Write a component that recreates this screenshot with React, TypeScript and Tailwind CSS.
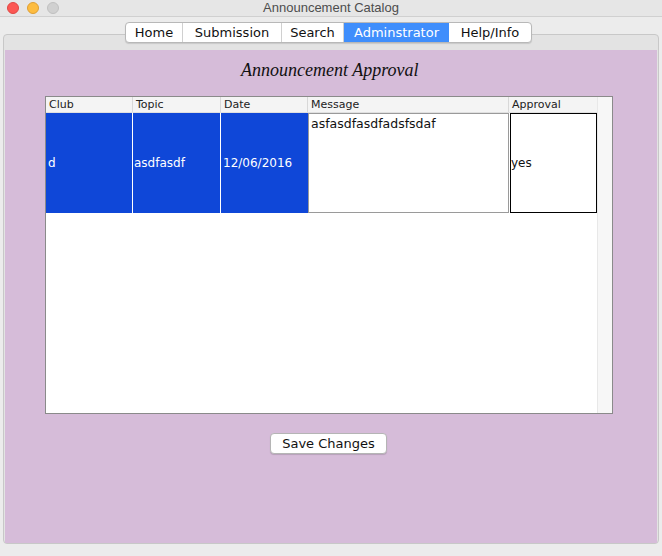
import React from "react";

export default function App() {
  const tabs = ["Home", "Submission", "Search", "Adminstrator", "Help/Info"];
  const widths = [57, 99, 62, 105, 82];
  return (
    <div className="w-[662px] h-[556px] bg-[#ececec] overflow-hidden relative" style={{ fontFamily: '"DejaVu Sans", "Noto Sans", sans-serif' }}>
      {/* Title bar */}
      <div className="h-[17px] bg-[#e6e6e6] border-b border-[#d0d0d0] flex items-center relative">
        <div className="flex gap-[8px] pl-[7px]">
          <div className="w-[12px] h-[12px] rounded-full bg-[#fc5753] border border-[#df4744]" />
          <div className="w-[12px] h-[12px] rounded-full bg-[#fdbc40] border border-[#de9f34]" />
          <div className="w-[12px] h-[12px] rounded-full bg-[#d0d0d0] border border-[#c0c0c0]" />
        </div>
        <div className="absolute inset-0 flex items-center justify-center text-[13px] text-[#4d4d4d]" style={{ fontFamily: '"Liberation Sans", sans-serif' }}>
          Announcement Catalog
        </div>
      </div>

      {/* Tab pane */}
      <div className="relative px-[3px] pt-[17px]">
        <div className="border border-[#c8c8c8] rounded-[4px] bg-[#e3e3e3] pt-[15px] px-[1px] pb-[1px] h-[510px]">
          <div className="bg-[#d6bcd9] h-[493px] flex flex-col">
            <div className="mt-[7px] self-start ml-[236px] text-[18px] italic text-[#111]" style={{ fontFamily: '"Liberation Serif", serif' }}>
              Announcement Approval
            </div>
            {/* Table */}
            <div className="mt-[12px] ml-[40px] w-[568px] h-[318px] bg-white border border-[#8a8a8a] flex">
              <div className="w-[551px] flex flex-col">
                <div className="flex h-[16px] bg-[#f4f4f4] border-b border-[#e0e0e0] text-[11px] text-[#222]">
                  <div className="w-[87px] pl-[3px] border-r border-[#d8d8d8] leading-[16px]">Club</div>
                  <div className="w-[88px] pl-[3px] border-r border-[#d8d8d8] leading-[16px]">Topic</div>
                  <div className="w-[87px] pl-[3px] border-r border-[#d8d8d8] leading-[16px]">Date</div>
                  <div className="w-[201px] pl-[3px] border-r border-[#d8d8d8] leading-[16px]">Message</div>
                  <div className="w-[88px] pl-[3px] leading-[16px]">Approval</div>
                </div>
                <div className="flex h-[100px] text-[12px]">
                  <div className="w-[87px] bg-[#0f47d8] text-white flex items-center pl-[2px] border-r border-white">d</div>
                  <div className="w-[88px] bg-[#0f47d8] text-white flex items-center pl-[1px] border-r border-white">asdfasdf</div>
                  <div className="w-[87px] bg-[#0f47d8] text-white flex items-center pl-[2px]">12/06/2016</div>
                  <div className="w-[201px] border border-[#9a9a9a] text-[#111] pl-[2px] pt-[1px] text-[12.5px]">asfasdfasdfadsfsdaf</div>
                  <div className="w-[87px] ml-[1px] border border-black text-[#111] flex items-center">yes</div>
                </div>
              </div>
              <div className="flex-1 bg-[#f7f7f7] border-l border-[#e8e8e8]" />
            </div>
            <button className="mt-[19px] ml-[265px] self-start w-[117px] h-[21px] bg-white border border-[#b5b5b5] rounded-[4px] text-[13px] text-[#111] shadow-[0_1px_1px_rgba(0,0,0,0.15)]">
              Save Changes
            </button>
          </div>
        </div>
        {/* Tabs */}
        <div className="absolute top-[5px] left-0 right-0 flex justify-center">
          <div className="ml-[-5px] flex h-[21px] bg-white border border-[#b8b8b8] rounded-[4px] overflow-hidden shadow-[0_1px_1px_rgba(0,0,0,0.12)] text-[13px]">
            {tabs.map((t, i) => (
              <div
                key={t}
                style={{ width: widths[i] }}
                className={
                  i === 3
                    ? "flex items-center justify-center bg-[#3f8efc] text-white"
                    : "flex items-center justify-center text-[#111] " + (i < 4 ? "border-r border-[#d0d0d0]" : "")
                }
              >
                {t}
              </div>
            ))}
          </div>
        </div>
      </div>
    </div>
  );
}
